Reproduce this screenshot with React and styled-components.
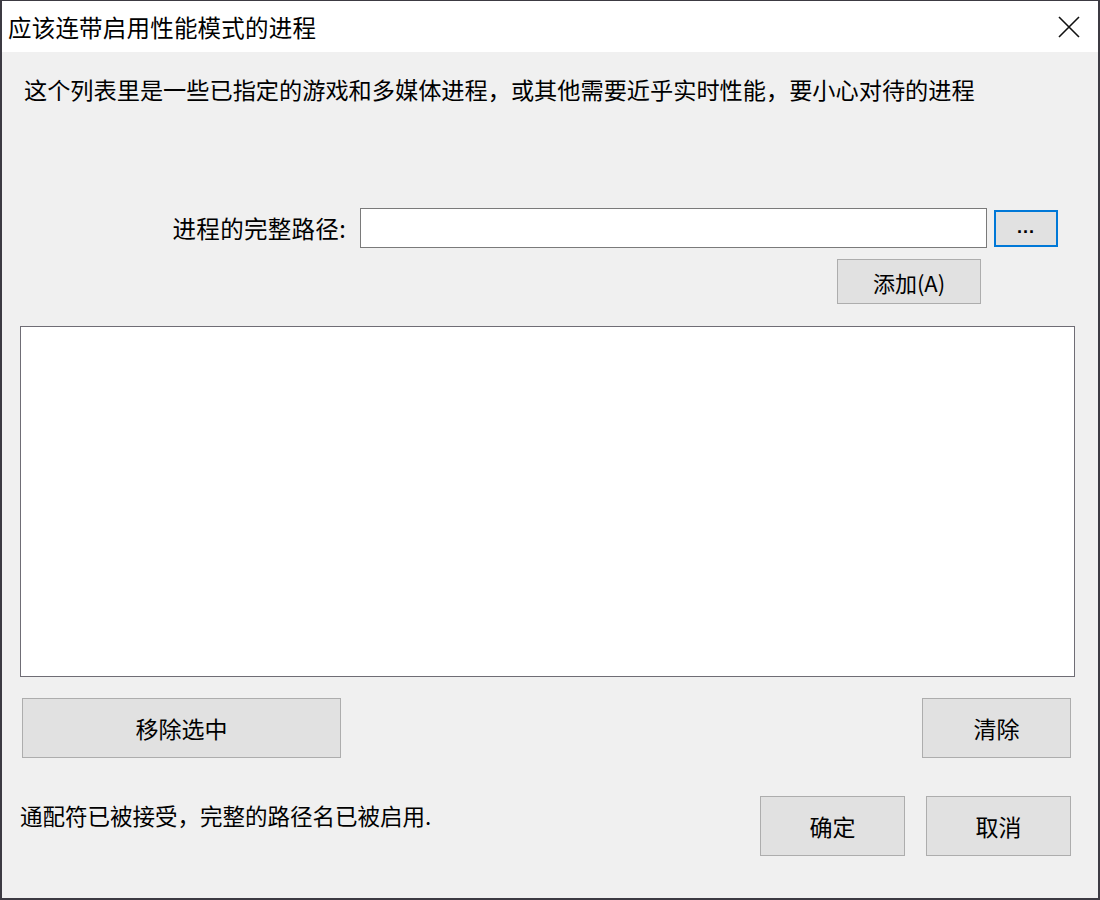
import styled, { createGlobalStyle } from "styled-components"

const GlobalStyle = createGlobalStyle`
  html, body {
    margin: 0;
    padding: 0;
    background: #3c3a42;
  }
  body {
    font-family: "Noto Sans CJK SC", "Noto Sans", "Liberation Sans", sans-serif;
    color: #000;
  }
`

export default function App() {
    return <>
        <GlobalStyle />
        <Window>
            <TitleBar>
                <Title>应该连带启用性能模式的进程</Title>
                <CloseButton aria-label="关闭">
                    <svg width="22" height="22" viewBox="0 0 22 22">
                        <path d="M1 1 L21 21 M21 1 L1 21" stroke="#111" strokeWidth="1.6" fill="none" />
                    </svg>
                </CloseButton>
            </TitleBar>
            <Body>
                <Description>这个列表里是一些已指定的游戏和多媒体进程，或其他需要近乎实时性能，要小心对待的进程</Description>
                <PathForm>
                    <Label htmlFor="path">进程的完整路径:</Label>
                    <PathInput id="path" type="text" />
                    <BrowseButton>...</BrowseButton>
                    <AddButton>添加(A)</AddButton>
                </PathForm>
                <ProcessList />
                <ActionRow>
                    <Button $width={319}>移除选中</Button>
                    <Button $width={149}>清除</Button>
                </ActionRow>
                <Footer>
                    <Hint>通配符已被接受，完整的路径名已被启用.</Hint>
                    <FooterButtons>
                        <Button $width={145}>确定</Button>
                        <Button $width={145}>取消</Button>
                    </FooterButtons>
                </Footer>
            </Body>
        </Window>
    </>
}

const Window = styled.div`
    box-sizing: border-box;
    width: 1100px;
    height: 900px;
    border: 2px solid #3c3a42;
    border-top-width: 1px;
    background: #f0f0f0;
    display: flex;
    flex-direction: column;
`

const TitleBar = styled.div`
    height: 51px;
    background: #fff;
    display: flex;
    align-items: center;
    justify-content: space-between;
    padding: 0 18px 0 6px;
`

const Title = styled.h1`
    margin: 0;
    font-size: 23.5px;
    font-weight: 400;
    letter-spacing: 0.2px;
    color: #000;
`

const CloseButton = styled.button`
    border: none;
    background: transparent;
    padding: 0;
    display: flex;
    margin-top: 1px;
`

const Body = styled.div`
    flex: 1;
    display: flex;
    flex-direction: column;
    padding: 0 23px 0 18px;
`

const Description = styled.p`
    margin: 22px 0 0 4px;
    font-size: 23.2px;
    line-height: 30px;
`

const PathForm = styled.div`
    margin-top: 104px;
    padding-right: 17px;
    display: grid;
    grid-template-columns: 1fr 627px 71px;
    align-items: center;
`

const Label = styled.label`
    justify-self: end;
    font-size: 23.5px;
    letter-spacing: 0.3px;
    margin-right: 14px;
`

const PathInput = styled.input`
    box-sizing: border-box;
    width: 100%;
    height: 40px;
    border: 1px solid #7a7a7a;
    background: #fff;
    outline: none;
    font-size: 20px;
    padding: 0 6px;
`

const Button = styled.button`
    box-sizing: border-box;
    width: ${p => p.$width}px;
    height: 60px;
    border: 1px solid #adadad;
    background: #e1e1e1;
    font-family: inherit;
    font-size: 23px;
    color: #000;
    padding: 0;
    display: flex;
    align-items: center;
    justify-content: center;
`

const BrowseButton = styled(Button)`
    justify-self: end;
    width: 64px;
    height: 37px;
    border: 2px solid #0078d7;
    font-family: "Liberation Sans", sans-serif;
    font-size: 18px;
    font-weight: 700;
    letter-spacing: 1px;
    padding-bottom: 2px;
`

const AddButton = styled(Button)`
    grid-column: 2;
    justify-self: end;
    margin: 11px 6px 0 0;
    width: 144px;
    height: 45px;
    font-size: 22px;
`

const ProcessList = styled.div`
    margin-top: 22px;
    height: 351px;
    box-sizing: border-box;
    border: 1px solid #6f6d75;
    background: #fff;
`

const ActionRow = styled.div`
    margin: 21px 4px 0 2px;
    display: flex;
    justify-content: space-between;
`

const Footer = styled.div`
    margin: 38px 4px 0 0;
    display: flex;
    justify-content: space-between;
    align-items: flex-start;
`

const Hint = styled.p`
    margin: 4px 0 0 0;
    font-size: 22.5px;
    line-height: 30px;
`

const FooterButtons = styled.div`
    display: flex;
    gap: 21px;
`
